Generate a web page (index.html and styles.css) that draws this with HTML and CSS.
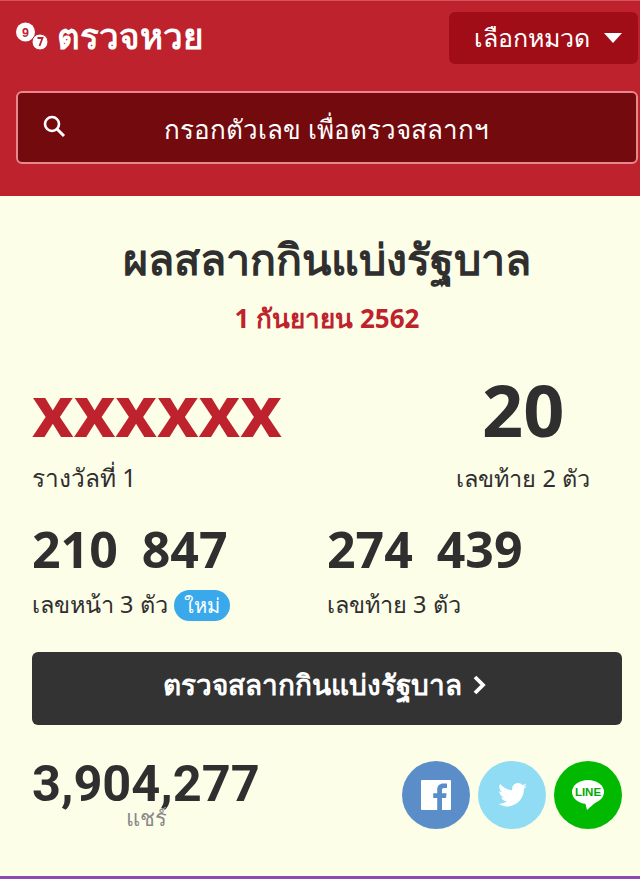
FILE: index.html
```html
<!DOCTYPE html>
<html lang="th">
<head>
    <meta charset="UTF-8">
    <title>ตรวจหวย</title>
    <link rel="stylesheet" href="styles.css">
</head>
<body>
<div class="header">
    <div class="topbar">
        <a class="logo">
            <svg class="logo-icon" width="33" height="28" viewBox="0 0 33 28">
                <circle cx="9.500" cy="10" r="9.500" fill="#fff"/>
                <circle cx="24" cy="20" r="8" fill="#fff" stroke="#bd222d" stroke-width="1"/>
                <text x="9.500" y="14.500" class="logo-digit" text-anchor="middle">9</text>
                <path d="M21.500 16h5l-3 8" fill="none" stroke="#bd222d" stroke-width="1.800"/>
            </svg>
            <span>ตรวจหวย</span>
        </a>
        <div class="category">เลือกหมวด <i class="caret"></i></div>
    </div>
    <div class="search">
        <svg class="search-icon" width="24" height="24" viewBox="0 0 24 24">
            <circle cx="10" cy="10" r="7" fill="none" stroke="#fff" stroke-width="2.600"/>
            <path d="M15 15l7 7" stroke="#fff" stroke-width="3" fill="none"/>
        </svg>
        <span class="search-text">กรอกตัวเลข เพื่อตรวจสลากฯ</span>
    </div>
</div>
<div class="main">
    <h1 class="title">ผลสลากกินแบ่งรัฐบาล</h1>
    <p class="date">1 กันยายน 2562</p>
    <div class="prize-top">
        <div>
            <div class="first">xxxxxx</div>
            <div class="label label-first">รางวัลที่ 1</div>
        </div>
        <div class="last-two">
            <div class="big">20</div>
            <div class="label">เลขท้าย 2 ตัว</div>
        </div>
    </div>
    <div class="prize-row">
        <div>
            <div class="mid">210 847</div>
            <div class="label">เลขหน้า 3 ตัว <span class="new">ใหม่</span></div>
        </div>
        <div>
            <div class="mid">274 439</div>
            <div class="label">เลขท้าย 3 ตัว</div>
        </div>
    </div>
    <a class="check-btn">ตรวจสลากกินแบ่งรัฐบาล
        <svg width="16" height="22" viewBox="0 0 16 22"><path d="M3 3l8 8-8 8" fill="none" stroke="#fff" stroke-width="3.800"/></svg>
    </a>
    <div class="share">
        <div class="share-count">
            <div class="count">3,904,277</div>
            <div class="share-label">แชร์</div>
        </div>
        <div class="share-icons">
            <a class="circle fb">
                <svg width="30" height="30" viewBox="0 0 30 30">
                    <path d="M1 0h28a1 1 0 0 1 1 1v28a1 1 0 0 1-1 1h-8V18h4l.6-4.800H21v-3c0-1.400.4-2.300 2.400-2.300H26V3.600C25.500 3.500 24 3.400 22.300 3.400c-3.600 0-6.100 2.200-6.100 6.200v3.600h-4V18h4v12H1a1 1 0 0 1-1-1V1a1 1 0 0 1 1-1z" fill="#fff"/>
                </svg>
            </a>
            <a class="circle tw">
                <svg width="29" height="24" viewBox="0 0 24 20">
                    <path d="M24 2.400c-.9.400-1.800.700-2.800.800 1-.6 1.800-1.600 2.200-2.700-1 .6-2 1-3.100 1.200C19.300.7 18 0 16.600 0c-2.700 0-4.900 2.200-4.900 4.900 0 .4 0 .8.100 1.100C7.700 5.800 4.100 3.900 1.700.9c-.4.700-.7 1.600-.7 2.500 0 1.700.9 3.200 2.200 4.100-.8 0-1.600-.2-2.200-.6v.1c0 2.400 1.700 4.400 3.900 4.800-.4.100-.8.200-1.300.2-.3 0-.6 0-.9-.1.600 2 2.400 3.400 4.600 3.400-1.700 1.300-3.800 2.100-6.100 2.100-.4 0-.8 0-1.200-.1C2.200 18.300 4.800 19.500 7.500 19.500c9.100 0 14-7.500 14-14v-.6c1-.7 1.800-1.600 2.500-2.500z" fill="#fff"/>
                </svg>
            </a>
            <a class="circle line">
                <svg width="32" height="30" viewBox="0 0 32 30">
                    <ellipse cx="16" cy="12" rx="16" ry="12" fill="#fff"/>
                    <path d="M13 22l2 8 9-8z" fill="#fff"/>
                    <text x="16" y="16" class="line-text" text-anchor="middle">LINE</text>
                </svg>
            </a>
        </div>
    </div>
</div>
<div class="footer-line"></div>
</body>
</html>
```

FILE: styles.css
```css
*{
    margin: 0;
    padding: 0;
    box-sizing: border-box;
}
html, body{
    height: 100%;
}
body{
    background: #fdfee8;
    color: #2f2f2f;
    font-family: "Noto Sans", "Open Sans", sans-serif;
    display: flex;
    flex-direction: column;
    overflow: hidden;
}
.header{
    height: 196px;
    background: #bd222d;
    padding: 11px 2px 0 16px;
    border-top: 1px solid #d3545c;
}
.topbar{
    display: flex;
    justify-content: space-between;
    align-items: center;
    height: 52px;
}
.logo{
    display: flex;
    align-items: center;
    gap: 8px;
    margin-bottom: 4px;
    color: #fff;
    font-size: 35px;
    font-weight: 700;
}
.logo-digit{
    font-family: "Liberation Sans", sans-serif;
    font-size: 12.500px;
    font-weight: 700;
    fill: #bd222d;
}
.category{
    width: 189px;
    height: 52px;
    background: #a00d17;
    border-radius: 6px;
    color: #fff;
    font-size: 25px;
    display: flex;
    align-items: center;
    justify-content: flex-end;
    gap: 14px;
    padding-right: 16px;
}
.caret{
    width: 0;
    height: 0;
    border-left: 9px solid transparent;
    border-right: 9px solid transparent;
    border-top: 10px solid #fff;
}
.search{
    margin-top: 27px;
    height: 73px;
    background: #730a0e;
    border: 2px solid #e8878d;
    border-radius: 6px;
    color: #fff;
    font-size: 26px;
    display: flex;
    align-items: center;
    padding-left: 24px;
}
.search-icon{
    margin-bottom: 4px;
}
.search-text{
    margin-left: 98px;
    margin-top: 4px;
}
.main{
    flex: 1;
    padding: 0 18px 0 32px;
}
.title{
    margin-top: 33px;
    font-size: 43px;
    line-height: 60px;
    font-weight: 700;
    text-align: center;
}
.date{
    margin-top: 11px;
    font-size: 26px;
    line-height: 36px;
    font-weight: 700;
    color: #bd222d;
    text-align: center;
}
.prize-top{
    display: flex;
    justify-content: space-between;
    margin-top: 33px;
    padding-right: 32px;
}
.first{
    font-family: "Open Sans", sans-serif;
    font-size: 72px;
    line-height: 80px;
    font-weight: 700;
    color: #bd222d;
}
.last-two{
    text-align: center;
}
.big{
    font-family: "Open Sans", sans-serif;
    font-size: 72px;
    line-height: 80px;
    font-weight: 700;
}
.label{
    font-size: 23.500px;
    line-height: 34px;
    margin-top: 12px;
}
.label-first{
    font-size: 24.500px;
}
.prize-row{
    display: grid;
    grid-template-columns: 295px 1fr;
    margin-top: 26px;
}
.mid{
    font-family: "Open Sans", sans-serif;
    font-size: 50px;
    line-height: 56px;
    font-weight: 700;
    word-spacing: 11px;
}
.prize-row .label{
    margin-top: 10px;
}
.new{
    display: inline-block;
    background: #3aa9ec;
    color: #fff;
    border-radius: 16px;
    padding: 0 10px;
    line-height: 31px;
    font-size: 20px;
}
.check-btn{
    margin-top: 31px;
    height: 73px;
    padding: 0 4px 8px 0;
    background: #333;
    border-radius: 6px;
    color: #fff;
    font-size: 28px;
    font-weight: 700;
    display: flex;
    align-items: center;
    justify-content: center;
    gap: 10px;
}
.share{
    display: flex;
    justify-content: space-between;
    margin-top: 36px;
}
.count{
    font-family: Roboto, sans-serif;
    font-size: 50.500px;
    line-height: 46px;
    font-weight: 700;
}
.share-label{
    color: #8a8a8a;
    font-size: 22px;
    line-height: 26px;
    margin-top: -3px;
    width: 228px;
    text-align: center;
}
.share-icons{
    display: flex;
    gap: 8px;
}
.circle{
    width: 68px;
    height: 68px;
    border-radius: 50%;
    display: flex;
    align-items: center;
    justify-content: center;
}
.fb{
    background: #5b8ec8;
}
.tw{
    background: #8fdcf4;
}
.line{
    background: #00b900;
}
.line-text{
    font-family: "Liberation Sans", sans-serif;
    font-size: 11.500px;
    font-weight: 700;
    fill: #00a800;
}
.footer-line{
    height: 3px;
    background: #8a4bb0;
}
```
